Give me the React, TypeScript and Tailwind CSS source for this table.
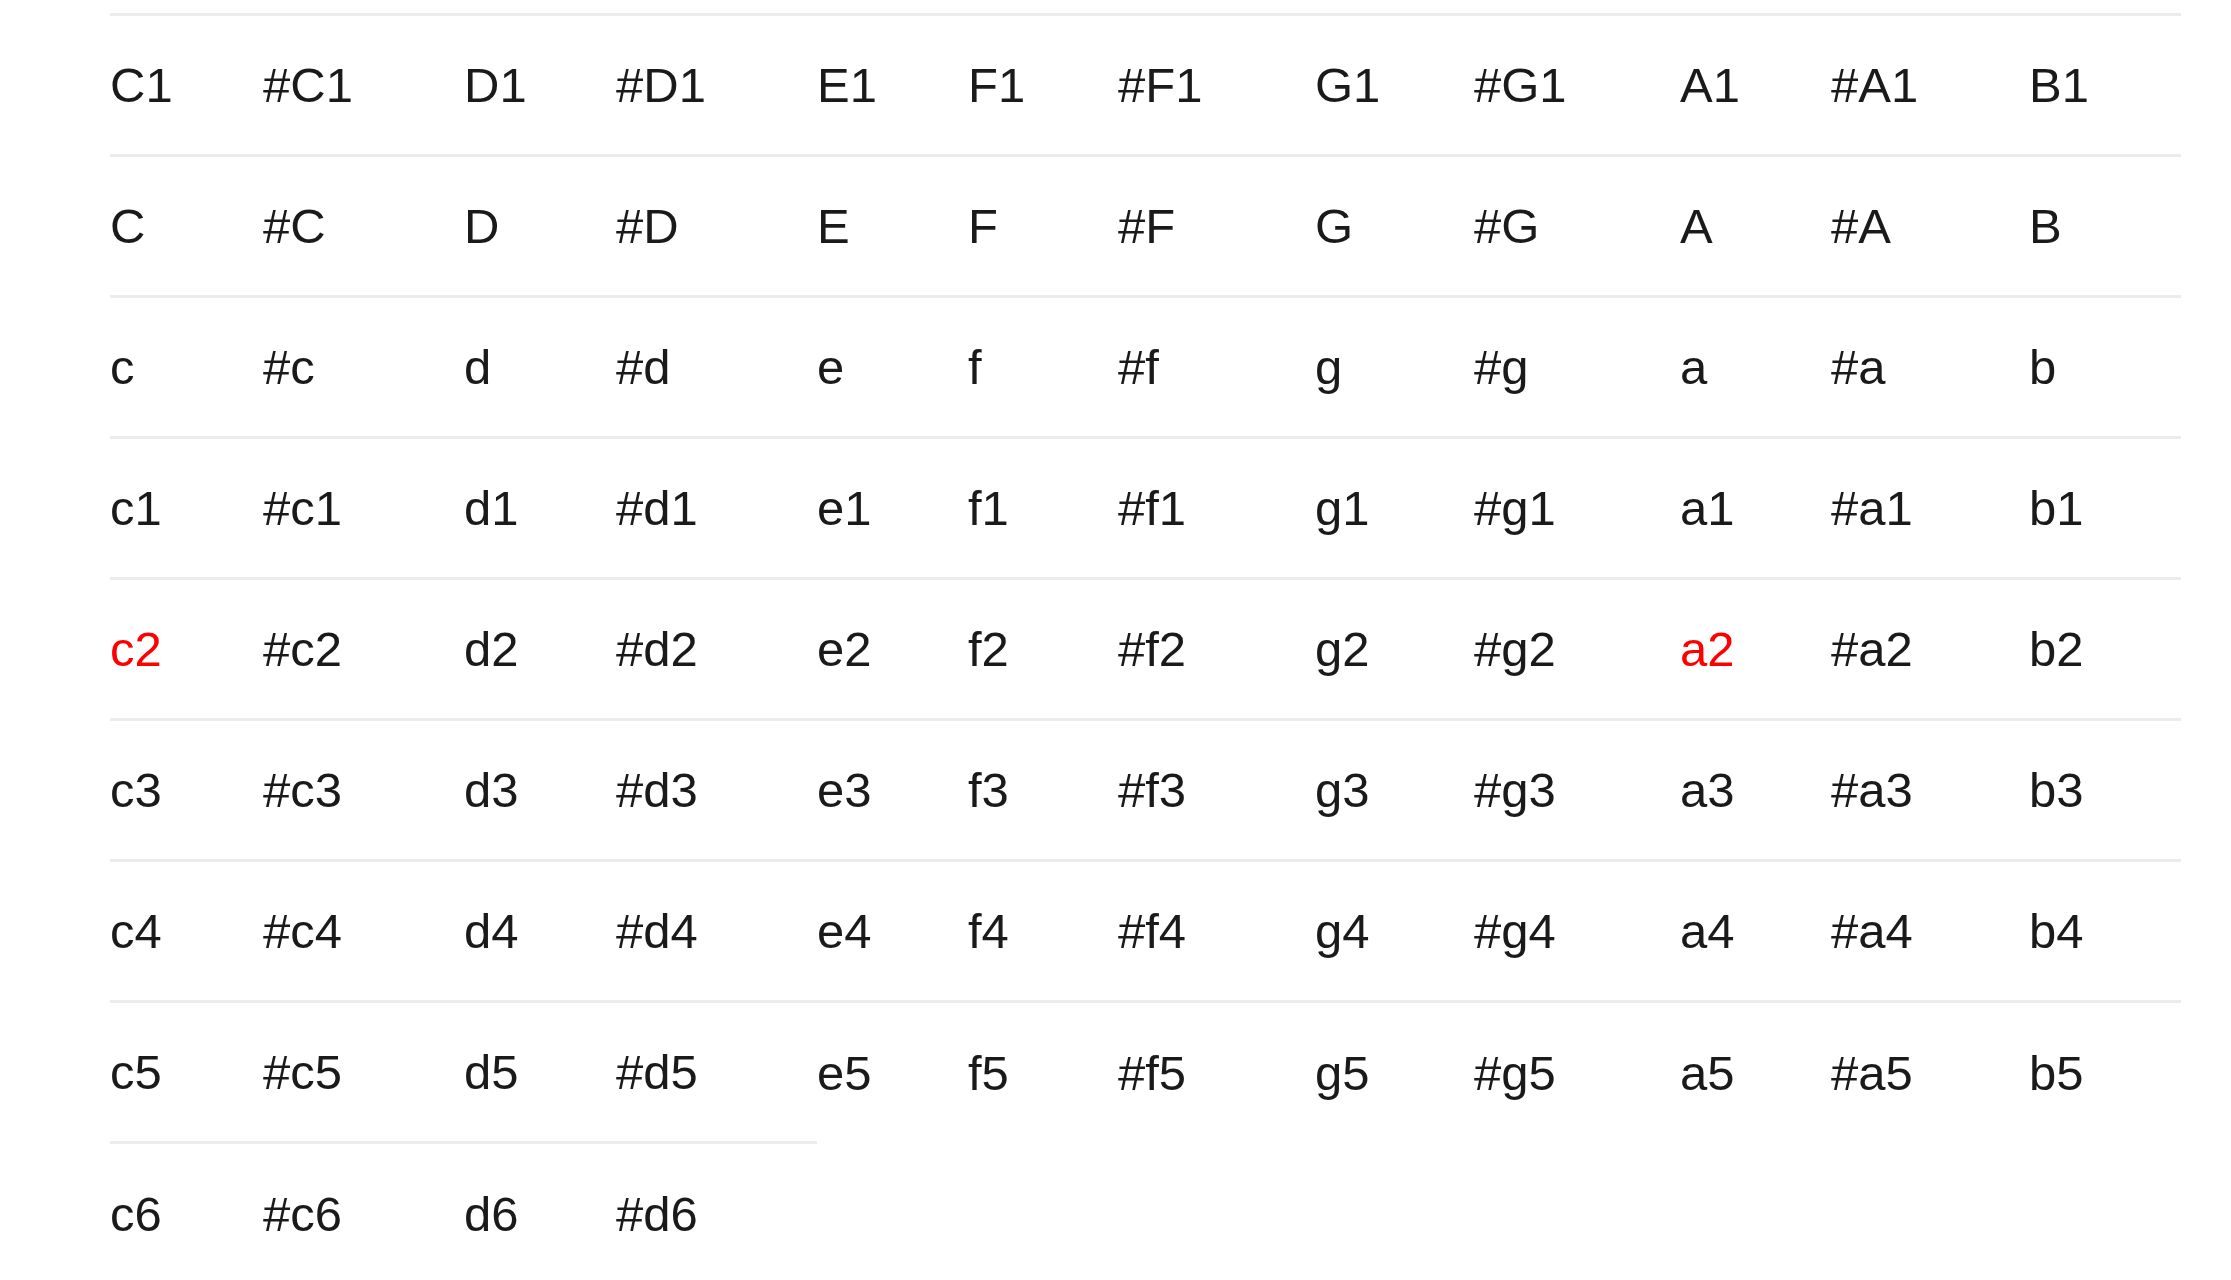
const COL_WIDTHS = ['w-[153px]', 'w-[201px]', 'w-[152px]', 'w-[201px]', 'w-[151px]', 'w-[150px]', 'w-[197px]', 'w-[159px]', 'w-[206px]', 'w-[151px]', 'w-[198px]', 'w-[152px]'];

const NOTES = ['c', '#c', 'd', '#d', 'e', 'f', '#f', 'g', '#g', 'a', '#a', 'b'];

function noteRow(suffix: string, upper = false) {
  return NOTES.map((n) => (upper ? n.toUpperCase() : n) + suffix);
}

const ROWS: string[][] = [
  noteRow('1', true),
  noteRow('', true),
  noteRow(''),
  noteRow('1'),
  noteRow('2'),
  noteRow('3'),
  noteRow('4'),
  noteRow('5'),
  ['c6', '#c6', 'd6', '#d6'],
];

// notes shown in red
const HIGHLIGHT = new Set(['c2', 'a2']);

export default function App() {
  return (
    <div className="min-h-screen bg-white pl-[110px] pt-[13px] font-['Liberation_Sans',Arial,sans-serif]">
      <table className="w-[2071px] table-fixed border-collapse">
        <colgroup>
          {COL_WIDTHS.map((w, i) => (
            <col key={i} className={w} />
          ))}
        </colgroup>
        <tbody>
          {ROWS.map((row, ri) => (
            <tr key={ri}>
              {row.map((note) => (
                <td
                  key={note}
                  className={`h-[141px] border-t-[3px] border-[#ececec] p-0 align-middle text-[49px] leading-[56px] ${
                    HIGHLIGHT.has(note) ? 'text-[#ff0000]' : 'text-[#1a1a1a]'
                  }`}
                >
                  {note}
                </td>
              ))}
            </tr>
          ))}
        </tbody>
      </table>
    </div>
  );
}
